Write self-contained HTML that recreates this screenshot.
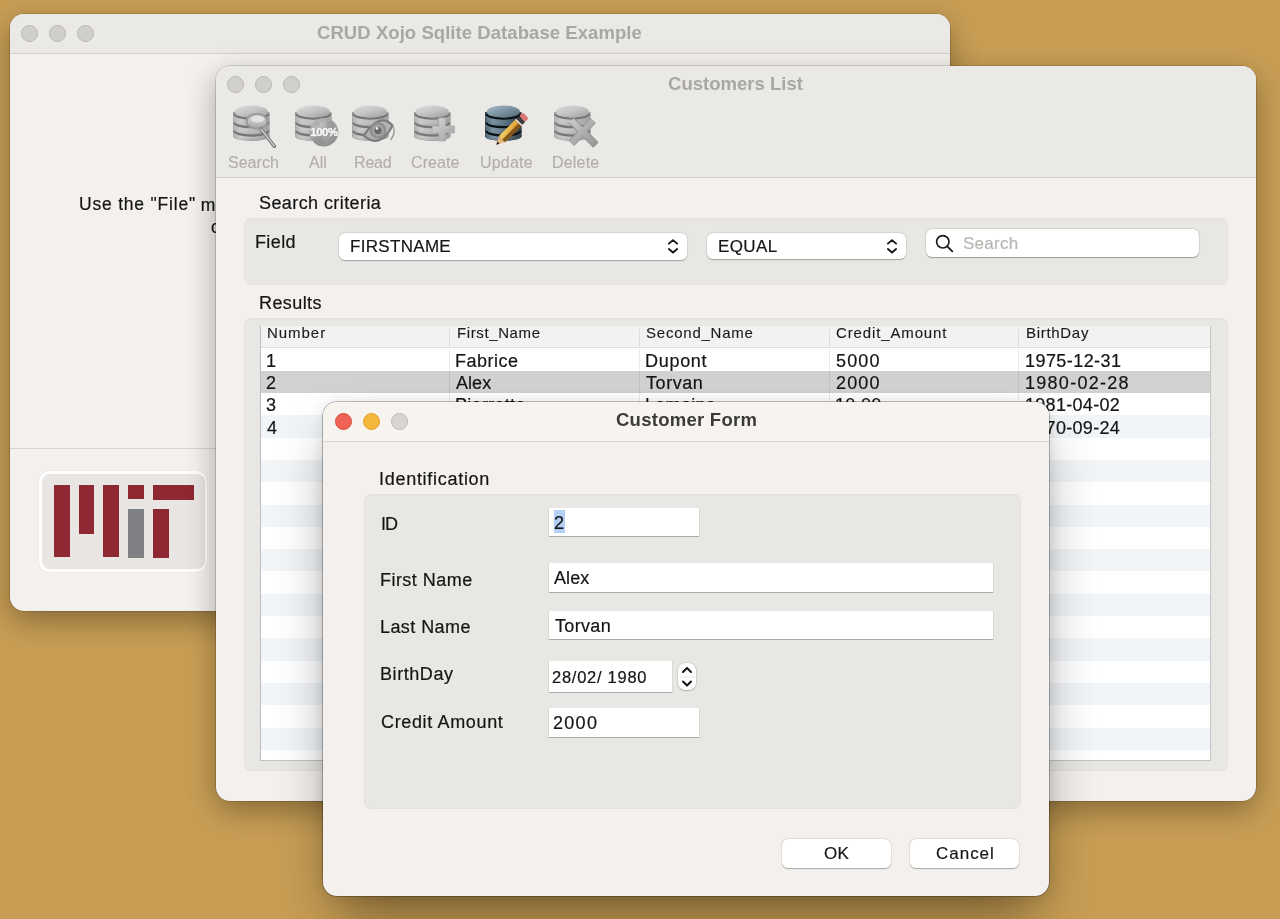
<!DOCTYPE html>
<html><head><meta charset="utf-8">
<style>
*{margin:0;padding:0;box-sizing:border-box}
html,body{width:1280px;height:919px;overflow:hidden}
body{background:#C89E54;font-family:"Liberation Sans",sans-serif;color:#1E1E1E;position:relative}
.abs{position:absolute}
.win{position:absolute;border-radius:14px;overflow:hidden;background:#F3F0ED}
.tl{position:absolute;width:17px;height:17px;border-radius:50%;border:1px solid}
.t{position:absolute;white-space:nowrap;line-height:1;opacity:0.999;-webkit-text-stroke-width:0.2px}
.grp{position:absolute;background:#E9E7E3;border:1px solid #E3E1DD;border-radius:7px}
.pop{position:absolute;background:#fff;border-radius:6px;box-shadow:0 0.8px 1.2px rgba(0,0,0,0.28),0 0 0 0.5px rgba(0,0,0,0.07)}
.chev{position:absolute;top:6px}
.sfield{position:absolute;background:#fff;border-radius:6px;box-shadow:0 0.8px 1.2px rgba(0,0,0,0.3),0 0 0 0.5px rgba(0,0,0,0.08)}
.fld{position:absolute;background:#fff;box-shadow:0 0.5px 0 0.5px rgba(0,0,0,0.12),0 1px 0 0 rgba(0,0,0,0.15)}
.step{position:absolute;background:#fff;border-radius:7px;box-shadow:0 0.5px 1.5px rgba(0,0,0,0.35),0 0 0 0.5px rgba(0,0,0,0.08)}
.btn{position:absolute;background:#fff;border-radius:6px;box-shadow:0 0.8px 1.2px rgba(0,0,0,0.28),0 0 0 0.5px rgba(0,0,0,0.07)}
body.calib .win, body.calib .win *{background:transparent !important;box-shadow:none !important;border-color:transparent !important}
body.calib{background:#fff !important}
body.calib svg{visibility:hidden !important}
body.calib .t{color:#000 !important;visibility:hidden}
body.calib .t.on{visibility:visible}
</style></head><body>
<div class="win" id="w1" style="left:10px;top:14px;width:940px;height:597px;box-shadow:0 0 0 0.6px rgba(0,0,0,0.25),0 10px 30px rgba(0,0,0,0.33)">
<div class="abs" style="left:0;top:0;width:940px;height:40px;background:#EBE9E5;border-bottom:1px solid #D3D1CD"></div>
<div class="tl" style="left:11px;top:11px;background:#D1CFCB;border-color:#B9B7B3"></div>
<div class="tl" style="left:39px;top:11px;background:#D1CFCB;border-color:#B9B7B3"></div>
<div class="tl" style="left:67px;top:11px;background:#D1CFCB;border-color:#B9B7B3"></div>
<div class="t" id="title1" style="left:307.00px;top:9.84px;font-size:18.5px;letter-spacing:0.061px;color:#A8A7A3;font-weight:bold;-webkit-text-stroke-width:0">CRUD Xojo Sqlite Database Example</div>
<div class="t" id="use" style="left:69.00px;top:182.19px;font-size:17.5px;letter-spacing:0.795px;color:#151515">Use the "File"</div>
<div class="t" id="use2" style="left:190.80px;top:182.69px;font-size:17.5px;letter-spacing:0.300px;color:#151515">m</div>
<div class="t" id="c2" style="left:201.00px;top:205.19px;font-size:17.5px;letter-spacing:0.300px;color:#151515">c</div>
<div class="abs" style="left:0;top:434px;width:940px;height:1px;background:#D6D4D0"></div>
<div class="abs" style="left:29.30px;top:457.30px;width:168.00px;height:100.70px;border-radius:10px;background:#fff;box-shadow:0 0 1px rgba(0,0,0,0.15)"></div>
<div class="abs" style="left:32.00px;top:460.00px;width:162.60px;height:95.30px;border-radius:8px;background:#E8E5E2"></div>
<div class="abs" style="left:44.40px;top:471.40px;width:15.30px;height:72.10px;background:#8E2832;filter:blur(0.45px)"></div>
<div class="abs" style="left:69.20px;top:471.40px;width:15.30px;height:49.00px;background:#8E2832;filter:blur(0.45px)"></div>
<div class="abs" style="left:93.40px;top:471.40px;width:15.90px;height:72.10px;background:#8E2832;filter:blur(0.45px)"></div>
<div class="abs" style="left:118.20px;top:471.40px;width:15.50px;height:13.90px;background:#8E2832;filter:blur(0.45px)"></div>
<div class="abs" style="left:118.20px;top:494.50px;width:15.50px;height:49.00px;background:#7F8083;filter:blur(0.45px)"></div>
<div class="abs" style="left:143.40px;top:471.40px;width:40.30px;height:14.30px;background:#8E2832;filter:blur(0.45px)"></div>
<div class="abs" style="left:143.40px;top:494.50px;width:15.70px;height:49.00px;background:#8E2832;filter:blur(0.45px)"></div>
</div>
<div class="win" id="w2" style="left:216px;top:66px;width:1040px;height:735px;box-shadow:0 0 0 0.6px rgba(0,0,0,0.25),0 10px 30px rgba(0,0,0,0.33)">
<div class="abs" style="left:0;top:0;width:1040px;height:112px;background:#EBE9E5;border-bottom:1px solid #D3D1CD"></div>
<div class="tl" style="left:11px;top:10px;background:#D1CFCB;border-color:#B9B7B3"></div>
<div class="tl" style="left:39px;top:10px;background:#D1CFCB;border-color:#B9B7B3"></div>
<div class="tl" style="left:67px;top:10px;background:#D1CFCB;border-color:#B9B7B3"></div>
<svg width="0" height="0" style="position:absolute"><defs>
<linearGradient id="gSide" x1="0" y1="0" x2="1" y2="0"><stop offset="0" stop-color="#B0B0B0"/><stop offset="0.18" stop-color="#CACACA"/><stop offset="0.55" stop-color="#BDBDBD"/><stop offset="1" stop-color="#9E9E9E"/></linearGradient>
<linearGradient id="bandShade" x1="0" y1="0" x2="0" y2="1"><stop offset="0" stop-color="#fff" stop-opacity="0.18"/><stop offset="0.5" stop-color="#fff" stop-opacity="0"/><stop offset="1" stop-color="#000" stop-opacity="0.12"/></linearGradient>
<linearGradient id="gTop" x1="0.1" y1="0" x2="0.9" y2="1"><stop offset="0" stop-color="#DADADA"/><stop offset="0.5" stop-color="#C4C4C4"/><stop offset="1" stop-color="#A2A2A2"/></linearGradient>
<linearGradient id="bSide" x1="0" y1="0" x2="1" y2="0"><stop offset="0" stop-color="#506676"/><stop offset="0.22" stop-color="#7A92A2"/><stop offset="0.6" stop-color="#536A7B"/><stop offset="1" stop-color="#2C3C47"/></linearGradient>
<linearGradient id="bTop" x1="0" y1="0" x2="1" y2="1"><stop offset="0" stop-color="#A9BFCD"/><stop offset="1" stop-color="#4F6676"/></linearGradient>
<linearGradient id="pen" x1="0" y1="0" x2="1" y2="1"><stop offset="0" stop-color="#F7D46A"/><stop offset="1" stop-color="#D08A1E"/></linearGradient>
<radialGradient id="globe" cx="0.35" cy="0.3" r="0.8"><stop offset="0" stop-color="#C4C4C4"/><stop offset="1" stop-color="#8A8A8A"/></radialGradient>
<filter id="soft" x="-10%" y="-10%" width="120%" height="120%"><feGaussianBlur stdDeviation="0.35"/></filter>
<linearGradient id="lens" x1="0" y1="0" x2="0" y2="1"><stop offset="0" stop-color="#D8D8D8"/><stop offset="1" stop-color="#A8A8A8"/></linearGradient>
<linearGradient id="plus" x1="0" y1="0" x2="1" y2="1"><stop offset="0" stop-color="#D8D8D8"/><stop offset="1" stop-color="#A0A0A0"/></linearGradient>
<linearGradient id="xbar" x1="0" y1="0" x2="1" y2="1"><stop offset="0" stop-color="#C9C9C9"/><stop offset="1" stop-color="#959595"/></linearGradient>
</defs></svg><svg class="abs" style="left:16.6px;top:39.2px;filter:blur(0.3px)" width="50" height="48" viewBox="0 0 50 48"><g><g><path d="M0 7 L0 31.2 A18.3 4.8 0 0 0 36.6 31.2 L36.6 7 Z" fill="#A0A0A0"/><path d="M0.4 25.6 L0.4 30.9 A17.900000000000002 4.8 0 0 0 36.2 30.9 L36.2 25.6 Z" fill="url(#gSide)"/><path d="M0.4 25.6 L0.4 30.9 A17.900000000000002 4.8 0 0 0 36.2 30.9 L36.2 25.6 Z" fill="url(#bandShade)"/><path d="M0.4 17.2 L0.4 25.3 A17.900000000000002 4.8 0 0 0 36.2 25.3 L36.2 17.2 Z" fill="url(#gSide)"/><path d="M0.4 17.2 L0.4 25.3 A17.900000000000002 4.8 0 0 0 36.2 25.3 L36.2 17.2 Z" fill="url(#bandShade)"/><path d="M0.4 8.6 L0.4 16.9 A17.900000000000002 4.8 0 0 0 36.2 16.9 L36.2 8.6 Z" fill="url(#gSide)"/><path d="M0.4 8.6 L0.4 16.9 A17.900000000000002 4.8 0 0 0 36.2 16.9 L36.2 8.6 Z" fill="url(#bandShade)"/><path d="M1.2 25.8 A17.1 4.8 0 0 0 35.4 25.8" fill="none" stroke="#767676" stroke-width="2.3"/><path d="M1.2 17.4 A17.1 4.8 0 0 0 35.4 17.4" fill="none" stroke="#767676" stroke-width="2.3"/><path d="M1.2 8.799999999999999 A17.1 4.8 0 0 0 35.4 8.799999999999999" fill="none" stroke="#767676" stroke-width="2.3"/><ellipse cx="18.3" cy="6.4" rx="16.6" ry="6.0" fill="url(#gTop)"/></g><ellipse cx="24" cy="16.3" rx="10.4" ry="7.2" fill="url(#lens)" stroke="#9A9A9A" stroke-width="2"/>
<ellipse cx="24.5" cy="14.2" rx="6.8" ry="3.4" fill="#E4E4E4" opacity="0.9"/>
<path d="M28 24 L41.4 41.4" stroke="#7A7A7A" stroke-width="3.6" stroke-linecap="round"/>
<path d="M28.2 24.2 L41.1 40.9" stroke="#CDCDCD" stroke-width="1.5" stroke-linecap="round"/></g></svg><svg class="abs" style="left:79.4px;top:39.2px;filter:blur(0.3px)" width="50" height="48" viewBox="0 0 50 48"><g><g><path d="M0 7 L0 31.2 A18.3 4.8 0 0 0 36.6 31.2 L36.6 7 Z" fill="#A0A0A0"/><path d="M0.4 25.6 L0.4 30.9 A17.900000000000002 4.8 0 0 0 36.2 30.9 L36.2 25.6 Z" fill="url(#gSide)"/><path d="M0.4 25.6 L0.4 30.9 A17.900000000000002 4.8 0 0 0 36.2 30.9 L36.2 25.6 Z" fill="url(#bandShade)"/><path d="M0.4 17.2 L0.4 25.3 A17.900000000000002 4.8 0 0 0 36.2 25.3 L36.2 17.2 Z" fill="url(#gSide)"/><path d="M0.4 17.2 L0.4 25.3 A17.900000000000002 4.8 0 0 0 36.2 25.3 L36.2 17.2 Z" fill="url(#bandShade)"/><path d="M0.4 8.6 L0.4 16.9 A17.900000000000002 4.8 0 0 0 36.2 16.9 L36.2 8.6 Z" fill="url(#gSide)"/><path d="M0.4 8.6 L0.4 16.9 A17.900000000000002 4.8 0 0 0 36.2 16.9 L36.2 8.6 Z" fill="url(#bandShade)"/><path d="M1.2 25.8 A17.1 4.8 0 0 0 35.4 25.8" fill="none" stroke="#767676" stroke-width="2.3"/><path d="M1.2 17.4 A17.1 4.8 0 0 0 35.4 17.4" fill="none" stroke="#767676" stroke-width="2.3"/><path d="M1.2 8.799999999999999 A17.1 4.8 0 0 0 35.4 8.799999999999999" fill="none" stroke="#767676" stroke-width="2.3"/><ellipse cx="18.3" cy="6.4" rx="16.6" ry="6.0" fill="url(#gTop)"/></g><circle cx="28.9" cy="27.2" r="14.3" fill="url(#globe)"/>
<circle cx="24" cy="36" r="5" fill="#888" opacity="0.35"/><circle cx="35" cy="20" r="4" fill="#888" opacity="0.3"/><circle cx="22" cy="19" r="3" fill="#999" opacity="0.3"/></g></svg><svg class="abs" style="left:135.6px;top:39.2px;filter:blur(0.3px)" width="50" height="48" viewBox="0 0 50 48"><g><g><path d="M0 7 L0 31.2 A18.3 4.8 0 0 0 36.6 31.2 L36.6 7 Z" fill="#A0A0A0"/><path d="M0.4 25.6 L0.4 30.9 A17.900000000000002 4.8 0 0 0 36.2 30.9 L36.2 25.6 Z" fill="url(#gSide)"/><path d="M0.4 25.6 L0.4 30.9 A17.900000000000002 4.8 0 0 0 36.2 30.9 L36.2 25.6 Z" fill="url(#bandShade)"/><path d="M0.4 17.2 L0.4 25.3 A17.900000000000002 4.8 0 0 0 36.2 25.3 L36.2 17.2 Z" fill="url(#gSide)"/><path d="M0.4 17.2 L0.4 25.3 A17.900000000000002 4.8 0 0 0 36.2 25.3 L36.2 17.2 Z" fill="url(#bandShade)"/><path d="M0.4 8.6 L0.4 16.9 A17.900000000000002 4.8 0 0 0 36.2 16.9 L36.2 8.6 Z" fill="url(#gSide)"/><path d="M0.4 8.6 L0.4 16.9 A17.900000000000002 4.8 0 0 0 36.2 16.9 L36.2 8.6 Z" fill="url(#bandShade)"/><path d="M1.2 25.8 A17.1 4.8 0 0 0 35.4 25.8" fill="none" stroke="#767676" stroke-width="2.3"/><path d="M1.2 17.4 A17.1 4.8 0 0 0 35.4 17.4" fill="none" stroke="#767676" stroke-width="2.3"/><path d="M1.2 8.799999999999999 A17.1 4.8 0 0 0 35.4 8.799999999999999" fill="none" stroke="#767676" stroke-width="2.3"/><ellipse cx="18.3" cy="6.4" rx="16.6" ry="6.0" fill="url(#gTop)"/></g><path d="M11.8 30.7 Q27.8 6.45 40.6 20.4 Q27.8 44.65 11.8 30.7 Z" fill="#B2B2B2" stroke="#7C7C7C" stroke-width="2.2" stroke-linejoin="round"/>
<circle cx="26" cy="25.4" r="8.2" fill="#8E8E8E"/>
<circle cx="26" cy="25.4" r="6.0" fill="#A2A2A2"/>
<circle cx="26" cy="25.6" r="3.6" fill="#686868"/>
<circle cx="25" cy="23.4" r="1.3" fill="#EEEEEE"/>
<path d="M40.6 20.4 Q44.5 28 38.5 35" fill="none" stroke="#9C9C9C" stroke-width="1.4"/></g></svg><svg class="abs" style="left:197.5px;top:39.2px;filter:blur(0.3px)" width="50" height="48" viewBox="0 0 50 48"><g><g><path d="M0 7 L0 31.2 A18.3 4.8 0 0 0 36.6 31.2 L36.6 7 Z" fill="#A0A0A0"/><path d="M0.4 25.6 L0.4 30.9 A17.900000000000002 4.8 0 0 0 36.2 30.9 L36.2 25.6 Z" fill="url(#gSide)"/><path d="M0.4 25.6 L0.4 30.9 A17.900000000000002 4.8 0 0 0 36.2 30.9 L36.2 25.6 Z" fill="url(#bandShade)"/><path d="M0.4 17.2 L0.4 25.3 A17.900000000000002 4.8 0 0 0 36.2 25.3 L36.2 17.2 Z" fill="url(#gSide)"/><path d="M0.4 17.2 L0.4 25.3 A17.900000000000002 4.8 0 0 0 36.2 25.3 L36.2 17.2 Z" fill="url(#bandShade)"/><path d="M0.4 8.6 L0.4 16.9 A17.900000000000002 4.8 0 0 0 36.2 16.9 L36.2 8.6 Z" fill="url(#gSide)"/><path d="M0.4 8.6 L0.4 16.9 A17.900000000000002 4.8 0 0 0 36.2 16.9 L36.2 8.6 Z" fill="url(#bandShade)"/><path d="M1.2 25.8 A17.1 4.8 0 0 0 35.4 25.8" fill="none" stroke="#767676" stroke-width="2.3"/><path d="M1.2 17.4 A17.1 4.8 0 0 0 35.4 17.4" fill="none" stroke="#767676" stroke-width="2.3"/><path d="M1.2 8.799999999999999 A17.1 4.8 0 0 0 35.4 8.799999999999999" fill="none" stroke="#767676" stroke-width="2.3"/><ellipse cx="18.3" cy="6.4" rx="16.6" ry="6.0" fill="url(#gTop)"/></g><path d="M24.7 12.8 h6.9 v8.1 h8.9 v7.1 h-8.9 v8.1 h-6.9 v-8.1 h-6.5 v-7.1 h6.5 z" fill="url(#plus)" stroke="#A5A5A5" stroke-width="0.6"/></g></svg><svg class="abs" style="left:269.3px;top:39.2px;filter:blur(0.3px)" width="50" height="48" viewBox="0 0 50 48"><g><g><path d="M0 7 L0 31.2 A18.3 4.8 0 0 0 36.6 31.2 L36.6 7 Z" fill="#2E3F4A"/><path d="M0.4 25.6 L0.4 30.9 A17.900000000000002 4.8 0 0 0 36.2 30.9 L36.2 25.6 Z" fill="url(#bSide)"/><path d="M0.4 25.6 L0.4 30.9 A17.900000000000002 4.8 0 0 0 36.2 30.9 L36.2 25.6 Z" fill="url(#bandShade)"/><path d="M0.4 17.2 L0.4 25.3 A17.900000000000002 4.8 0 0 0 36.2 25.3 L36.2 17.2 Z" fill="url(#bSide)"/><path d="M0.4 17.2 L0.4 25.3 A17.900000000000002 4.8 0 0 0 36.2 25.3 L36.2 17.2 Z" fill="url(#bandShade)"/><path d="M0.4 8.6 L0.4 16.9 A17.900000000000002 4.8 0 0 0 36.2 16.9 L36.2 8.6 Z" fill="url(#bSide)"/><path d="M0.4 8.6 L0.4 16.9 A17.900000000000002 4.8 0 0 0 36.2 16.9 L36.2 8.6 Z" fill="url(#bandShade)"/><path d="M1.2 25.8 A17.1 4.8 0 0 0 35.4 25.8" fill="none" stroke="#0B1014" stroke-width="2.3"/><path d="M1.2 17.4 A17.1 4.8 0 0 0 35.4 17.4" fill="none" stroke="#0B1014" stroke-width="2.3"/><path d="M1.2 8.799999999999999 A17.1 4.8 0 0 0 35.4 8.799999999999999" fill="none" stroke="#0B1014" stroke-width="2.3"/><ellipse cx="18.3" cy="6.4" rx="16.6" ry="6.0" fill="url(#bTop)"/></g><g transform="translate(11.3,39.8) rotate(-45)">
<path d="M0 0 L8 -4.3 L8 4.3 Z" fill="#E6B57E"/>
<path d="M0 0 L3 -1.6 L3 1.6 Z" fill="#1a1a1a"/>
<rect x="8" y="-4.3" width="23" height="8.6" fill="url(#pen)"/>
<rect x="8" y="0.6" width="23" height="3.7" fill="#7A4A14" opacity="0.9"/>
<rect x="31" y="-4.3" width="1.6" height="8.6" fill="#E8E8E8"/>
<rect x="32.6" y="-4.3" width="4" height="8.6" fill="#3C3C3C"/>
<rect x="36.6" y="-4.3" width="5" height="8.6" rx="2" fill="#DC7472"/>
</g></g></svg><svg class="abs" style="left:338.35px;top:39.2px;filter:blur(0.3px)" width="50" height="48" viewBox="0 0 50 48"><g><g><path d="M0 7 L0 31.2 A18.3 4.8 0 0 0 36.6 31.2 L36.6 7 Z" fill="#A0A0A0"/><path d="M0.4 25.6 L0.4 30.9 A17.900000000000002 4.8 0 0 0 36.2 30.9 L36.2 25.6 Z" fill="url(#gSide)"/><path d="M0.4 25.6 L0.4 30.9 A17.900000000000002 4.8 0 0 0 36.2 30.9 L36.2 25.6 Z" fill="url(#bandShade)"/><path d="M0.4 17.2 L0.4 25.3 A17.900000000000002 4.8 0 0 0 36.2 25.3 L36.2 17.2 Z" fill="url(#gSide)"/><path d="M0.4 17.2 L0.4 25.3 A17.900000000000002 4.8 0 0 0 36.2 25.3 L36.2 17.2 Z" fill="url(#bandShade)"/><path d="M0.4 8.6 L0.4 16.9 A17.900000000000002 4.8 0 0 0 36.2 16.9 L36.2 8.6 Z" fill="url(#gSide)"/><path d="M0.4 8.6 L0.4 16.9 A17.900000000000002 4.8 0 0 0 36.2 16.9 L36.2 8.6 Z" fill="url(#bandShade)"/><path d="M1.2 25.8 A17.1 4.8 0 0 0 35.4 25.8" fill="none" stroke="#767676" stroke-width="2.3"/><path d="M1.2 17.4 A17.1 4.8 0 0 0 35.4 17.4" fill="none" stroke="#767676" stroke-width="2.3"/><path d="M1.2 8.799999999999999 A17.1 4.8 0 0 0 35.4 8.799999999999999" fill="none" stroke="#767676" stroke-width="2.3"/><ellipse cx="18.3" cy="6.4" rx="16.6" ry="6.0" fill="url(#gTop)"/></g><path d="M17.45 15.5 L41.85 40" stroke="#939393" stroke-width="7.6" stroke-linecap="butt"/>
<path d="M39.15 15.5 L17.45 38.3" stroke="#939393" stroke-width="7.6" stroke-linecap="butt"/>
<path d="M17.45 15.5 L41.85 40" stroke="url(#xbar)" stroke-width="6" stroke-linecap="butt"/>
<path d="M39.15 15.5 L17.45 38.3" stroke="url(#xbar)" stroke-width="6" stroke-linecap="butt"/></g></svg><div class="t" style="left:94.3px;top:60.6px;font-size:11.4px;font-weight:bold;color:#F8F8F8;letter-spacing:-0.45px;-webkit-text-stroke:0.5px #F8F8F8;text-shadow:0 0 1.5px rgba(0,0,0,0.6)">100%</div><div class="grp" style="left:28.00px;top:151.50px;width:984.00px;height:67.90px;"></div>
<div class="pop" style="left:122.80px;top:167.00px;width:348.50px;height:26.70px;"><svg class="chev" style="left:329.7px" width="10" height="15" viewBox="0 0 10 15"><path d="M0.9 4.6 L5 1.1 L9.1 4.6 M0.9 10 L5 13.5 L9.1 10" fill="none" stroke="#111" stroke-width="1.8" stroke-linecap="round" stroke-linejoin="round"/></svg></div>
<div class="pop" style="left:490.80px;top:166.90px;width:199.70px;height:26.50px;"><svg class="chev" style="left:180.60000000000002px" width="10" height="15" viewBox="0 0 10 15"><path d="M0.9 4.6 L5 1.1 L9.1 4.6 M0.9 10 L5 13.5 L9.1 10" fill="none" stroke="#111" stroke-width="1.8" stroke-linecap="round" stroke-linejoin="round"/></svg></div>
<div class="sfield" style="left:709.60px;top:162.60px;width:273.70px;height:28.40px;"><svg class="abs" style="left:9.5px;top:5.5px" width="19" height="19" viewBox="0 0 19 19"><circle cx="7.8" cy="7.8" r="6.2" fill="none" stroke="#1a1a1a" stroke-width="1.7"/><path d="M12.3 12.3 L17.3 17.3" stroke="#1a1a1a" stroke-width="1.9" stroke-linecap="round"/></svg></div>
<div class="grp" style="left:28.00px;top:252.40px;width:984.00px;height:452.20px;"></div>
<div class="abs" style="left:44px;top:260px;width:951px;height:435px;background:#fff;overflow:hidden">
<div class="abs" style="left:0;top:0;width:951px;height:22px;background:#F1F2F1;border-bottom:1px solid #DEDEDE"></div>
<div class="abs" style="left:0;top:22.50px;width:951px;height:22.3px;background:#fff"></div>
<div class="abs" style="left:0;top:44.80px;width:951px;height:22.3px;background:#D1D1D1"></div>
<div class="abs" style="left:0;top:67.10px;width:951px;height:22.3px;background:#fff"></div>
<div class="abs" style="left:0;top:89.40px;width:951px;height:22.3px;background:#F2F5F8"></div>
<div class="abs" style="left:0;top:111.70px;width:951px;height:22.3px;background:#fff"></div>
<div class="abs" style="left:0;top:134.00px;width:951px;height:22.3px;background:#F2F5F8"></div>
<div class="abs" style="left:0;top:156.30px;width:951px;height:22.3px;background:#fff"></div>
<div class="abs" style="left:0;top:178.60px;width:951px;height:22.3px;background:#F2F5F8"></div>
<div class="abs" style="left:0;top:200.90px;width:951px;height:22.3px;background:#fff"></div>
<div class="abs" style="left:0;top:223.20px;width:951px;height:22.3px;background:#F2F5F8"></div>
<div class="abs" style="left:0;top:245.50px;width:951px;height:22.3px;background:#fff"></div>
<div class="abs" style="left:0;top:267.80px;width:951px;height:22.3px;background:#F2F5F8"></div>
<div class="abs" style="left:0;top:290.10px;width:951px;height:22.3px;background:#fff"></div>
<div class="abs" style="left:0;top:312.40px;width:951px;height:22.3px;background:#F2F5F8"></div>
<div class="abs" style="left:0;top:334.70px;width:951px;height:22.3px;background:#fff"></div>
<div class="abs" style="left:0;top:357.00px;width:951px;height:22.3px;background:#F2F5F8"></div>
<div class="abs" style="left:0;top:379.30px;width:951px;height:22.3px;background:#fff"></div>
<div class="abs" style="left:0;top:401.60px;width:951px;height:22.3px;background:#F2F5F8"></div>
<div class="abs" style="left:0;top:423.90px;width:951px;height:22.3px;background:#fff"></div>
<div class="abs" style="left:189.00px;top:3px;width:1px;height:17px;background:#DCDCDC"></div>
<div class="abs" style="left:189.00px;top:22.5px;width:1px;height:89.20px;background:rgba(0,0,0,0.08)"></div>
<div class="abs" style="left:378.90px;top:3px;width:1px;height:17px;background:#DCDCDC"></div>
<div class="abs" style="left:378.90px;top:22.5px;width:1px;height:89.20px;background:rgba(0,0,0,0.08)"></div>
<div class="abs" style="left:568.80px;top:3px;width:1px;height:17px;background:#DCDCDC"></div>
<div class="abs" style="left:568.80px;top:22.5px;width:1px;height:89.20px;background:rgba(0,0,0,0.08)"></div>
<div class="abs" style="left:758.25px;top:3px;width:1px;height:17px;background:#DCDCDC"></div>
<div class="abs" style="left:758.25px;top:22.5px;width:1px;height:89.20px;background:rgba(0,0,0,0.08)"></div>
<div class="abs" style="left:0;top:0;width:1.3px;height:435px;background:#BDBDBD"></div>
<div class="abs" style="left:949.7px;top:0;width:1.3px;height:435px;background:#C4C4C4"></div>
<div class="abs" style="left:0;top:434px;width:951px;height:1.3px;background:#C2C2C2"></div>
</div>
<div class="t" id="title2" style="left:452.00px;top:9.34px;font-size:18.5px;letter-spacing:0.017px;color:#A8A7A3;font-weight:bold;-webkit-text-stroke-width:0">Customers List</div>
<div class="t" id="tbSearch" style="left:12.00px;top:89.30px;font-size:16px;letter-spacing:0.020px;color:#B0AEAB;-webkit-text-stroke-width:0.12px">Search</div>
<div class="t" id="tbAll" style="left:93.00px;top:89.30px;font-size:16px;letter-spacing:-0.000px;color:#B0AEAB;-webkit-text-stroke-width:0.12px">All</div>
<div class="t" id="tbRead" style="left:138.00px;top:89.30px;font-size:16px;letter-spacing:-0.170px;color:#B0AEAB;-webkit-text-stroke-width:0.12px">Read</div>
<div class="t" id="tbCreate" style="left:195.00px;top:89.30px;font-size:16px;letter-spacing:0.100px;color:#B0AEAB;-webkit-text-stroke-width:0.12px">Create</div>
<div class="t" id="tbUpdate" style="left:264.00px;top:89.30px;font-size:16px;letter-spacing:0.190px;color:#B0AEAB;-webkit-text-stroke-width:0.12px">Update</div>
<div class="t" id="tbDelete" style="left:336.00px;top:89.30px;font-size:16px;letter-spacing:0.180px;color:#B0AEAB;-webkit-text-stroke-width:0.12px">Delete</div>
<div class="t" id="scrit" style="left:43.00px;top:128.19px;font-size:18px;letter-spacing:0.417px;color:#151515">Search criteria</div>
<div class="t" id="field" style="left:39.00px;top:167.19px;font-size:18px;letter-spacing:0.375px;color:#151515">Field</div>
<div class="t" id="firstname" style="left:134.00px;top:171.61px;font-size:17px;letter-spacing:0.311px;color:#151515">FIRSTNAME</div>
<div class="t" id="equal" style="left:502.00px;top:171.61px;font-size:17px;letter-spacing:0.400px;color:#151515">EQUAL</div>
<div class="t" id="searchph" style="left:747.00px;top:168.61px;font-size:17px;letter-spacing:0.280px;color:#B8B6B3">Search</div>
<div class="t" id="results" style="left:43.00px;top:228.19px;font-size:18px;letter-spacing:0.403px;color:#151515">Results</div>
<div class="t" id="hNumber" style="left:51.00px;top:258.90px;font-size:15px;letter-spacing:0.960px;color:#1A1A1A;-webkit-text-stroke-width:0.12px">Number</div>
<div class="t" id="hFirst_Name" style="left:241.00px;top:258.90px;font-size:15px;letter-spacing:0.608px;color:#1A1A1A;-webkit-text-stroke-width:0.12px">First_Name</div>
<div class="t" id="hSecond_Name" style="left:430.00px;top:258.90px;font-size:15px;letter-spacing:0.770px;color:#1A1A1A;-webkit-text-stroke-width:0.12px">Second_Name</div>
<div class="t" id="hCredit_Amount" style="left:620.00px;top:258.90px;font-size:15px;letter-spacing:0.864px;color:#1A1A1A;-webkit-text-stroke-width:0.12px">Credit_Amount</div>
<div class="t" id="hBirthDay" style="left:810.00px;top:258.90px;font-size:15px;letter-spacing:0.697px;color:#1A1A1A;-webkit-text-stroke-width:0.12px">BirthDay</div>
<div class="t" id="r0c0" style="left:50.00px;top:285.76px;font-size:18px;letter-spacing:0.300px;color:#141414">1</div>
<div class="t" id="r0c1" style="left:239.00px;top:285.76px;font-size:18px;letter-spacing:0.478px;color:#141414">Fabrice</div>
<div class="t" id="r0c2" style="left:429.00px;top:285.76px;font-size:18px;letter-spacing:0.710px;color:#141414">Dupont</div>
<div class="t" id="r0c3" style="left:620.00px;top:285.76px;font-size:18px;letter-spacing:1.133px;color:#141414">5000</div>
<div class="t" id="r0c4" style="left:809.00px;top:285.76px;font-size:18px;letter-spacing:0.434px;color:#141414">1975-12-31</div>
<div class="t" id="r1c0" style="left:50.00px;top:307.76px;font-size:18px;letter-spacing:0.300px;color:#141414">2</div>
<div class="t" id="r1c1" style="left:240.00px;top:307.76px;font-size:18px;letter-spacing:0.054px;color:#141414">Alex</div>
<div class="t" id="r1c2" style="left:430.00px;top:307.76px;font-size:18px;letter-spacing:0.570px;color:#141414">Torvan</div>
<div class="t" id="r1c3" style="left:620.00px;top:307.76px;font-size:18px;letter-spacing:1.133px;color:#141414">2000</div>
<div class="t" id="r1c4" style="left:809.00px;top:307.76px;font-size:18px;letter-spacing:1.277px;color:#141414">1980-02-28</div>
<div class="t" id="r2c0" style="left:50.00px;top:329.76px;font-size:18px;letter-spacing:0.300px;color:#141414">3</div>
<div class="t" id="r2c1" style="left:239.00px;top:329.76px;font-size:18px;letter-spacing:0.300px;color:#141414">Pierrette</div>
<div class="t" id="r2c2" style="left:429.00px;top:329.76px;font-size:18px;letter-spacing:0.300px;color:#141414">Lemoine</div>
<div class="t" id="r2c3" style="left:619.00px;top:329.76px;font-size:18px;letter-spacing:0.300px;color:#141414">10.00</div>
<div class="t" id="r2c4" style="left:809.00px;top:329.76px;font-size:18px;letter-spacing:0.300px;color:#141414">1981-04-02</div>
<div class="t" id="r3c0" style="left:51.00px;top:352.76px;font-size:18px;letter-spacing:0.300px;color:#141414">4</div>
<div class="t" id="r3c1" style="left:239.00px;top:352.76px;font-size:18px;letter-spacing:0.300px;color:#141414">Marc</div>
<div class="t" id="r3c2" style="left:429.00px;top:352.76px;font-size:18px;letter-spacing:0.300px;color:#141414">Durand</div>
<div class="t" id="r3c3" style="left:619.00px;top:352.76px;font-size:18px;letter-spacing:0.300px;color:#141414">1500</div>
<div class="t" id="r3c4" style="left:809.00px;top:352.76px;font-size:18px;letter-spacing:0.300px;color:#141414">1970-09-24</div>
</div>
<div class="win" id="w3" style="left:323px;top:402px;width:726px;height:494px;box-shadow:0 0 0 0.8px rgba(0,0,0,0.32),0 0 14px rgba(0,0,0,0.1),0 30px 56px -12px rgba(0,0,0,0.44)">
<div class="abs" style="left:0;top:0;width:726px;height:40px;background:#F7F4EF;border-bottom:1px solid #D8D5D1"></div>
<div class="tl" style="left:11.5px;top:10.5px;background:#EE6355;border-color:#DD4A3E"></div>
<div class="tl" style="left:39.5px;top:10.5px;background:#F5B63C;border-color:#E0A22C"></div>
<div class="tl" style="left:67.5px;top:10.5px;background:#D9D6D2;border-color:#BCB9B4"></div>
<div class="grp" style="left:41.40px;top:92.00px;width:656.20px;height:314.50px;"></div>
<div class="fld" style="left:226.00px;top:105.90px;width:149.75px;height:28.10px;"></div>
<div class="fld" style="left:226.00px;top:161.00px;width:444.20px;height:28.70px;"></div>
<div class="fld" style="left:226.00px;top:208.70px;width:444.20px;height:28.70px;"></div>
<div class="fld" style="left:226.00px;top:258.90px;width:123.20px;height:31.20px;"></div>
<div class="fld" style="left:226.00px;top:306.00px;width:149.90px;height:28.80px;"></div>
<div class="abs" style="left:230.80px;top:108.40px;width:11.10px;height:22.20px;background:#B5D0F5"></div>
<div class="step" style="left:354.80px;top:260.60px;width:18.20px;height:27.80px;"><svg class="abs" style="left:0;top:0" width="18" height="28" viewBox="0 0 18 28"><path d="M5 9 L9 5 L13 9 M5 18.5 L9 22.5 L13 18.5" fill="none" stroke="#111" stroke-width="2" stroke-linecap="round" stroke-linejoin="round"/><path d="M1 13.9 H17" stroke="#E4E4E4" stroke-width="1"/></svg></div>
<div class="btn" style="left:458.70px;top:437.20px;width:109.50px;height:28.80px;"></div>
<div class="btn" style="left:587.10px;top:437.20px;width:109.00px;height:28.80px;"></div>
<div class="t" id="title3" style="left:293.00px;top:9.34px;font-size:18.5px;letter-spacing:0.259px;color:#3B3B3B;font-weight:bold;-webkit-text-stroke-width:0">Customer Form</div>
<div class="t" id="ident" style="left:56.00px;top:68.19px;font-size:18px;letter-spacing:0.712px;color:#151515">Identification</div>
<div class="t" id="lID" style="left:58.00px;top:113.19px;font-size:18px;letter-spacing:-0.900px;color:#151515">ID</div>
<div class="t" id="lFirst" style="left:57.00px;top:169.19px;font-size:18px;letter-spacing:0.462px;color:#151515">First Name</div>
<div class="t" id="lLast" style="left:57.00px;top:216.19px;font-size:18px;letter-spacing:0.425px;color:#151515">Last Name</div>
<div class="t" id="lBirth" style="left:57.00px;top:263.49px;font-size:18px;letter-spacing:0.567px;color:#151515">BirthDay</div>
<div class="t" id="lCredit" style="left:58.00px;top:311.19px;font-size:18px;letter-spacing:0.644px;color:#151515">Credit Amount</div>
<div class="t" id="vID" style="left:231.00px;top:111.76px;font-size:18px;letter-spacing:0.300px;color:#151515">2</div>
<div class="t" id="vFirst" style="left:231.00px;top:166.76px;font-size:18px;letter-spacing:0.103px;color:#151515">Alex</div>
<div class="t" id="vLast" style="left:232.00px;top:214.76px;font-size:18px;letter-spacing:0.340px;color:#151515">Torvan</div>
<div class="t" id="vDate" style="left:229.00px;top:267.03px;font-size:16.5px;letter-spacing:0.730px;color:#151515">28/02/ 1980</div>
<div class="t" id="vCredit" style="left:230.00px;top:311.76px;font-size:18px;letter-spacing:1.300px;color:#151515">2000</div>
<div class="t" id="ok" style="left:501.00px;top:442.61px;font-size:17px;letter-spacing:0.200px;color:#151515">OK</div>
<div class="t" id="cancel" style="left:613.00px;top:442.61px;font-size:17px;letter-spacing:0.980px;color:#151515">Cancel</div>
</div>
</body></html>
